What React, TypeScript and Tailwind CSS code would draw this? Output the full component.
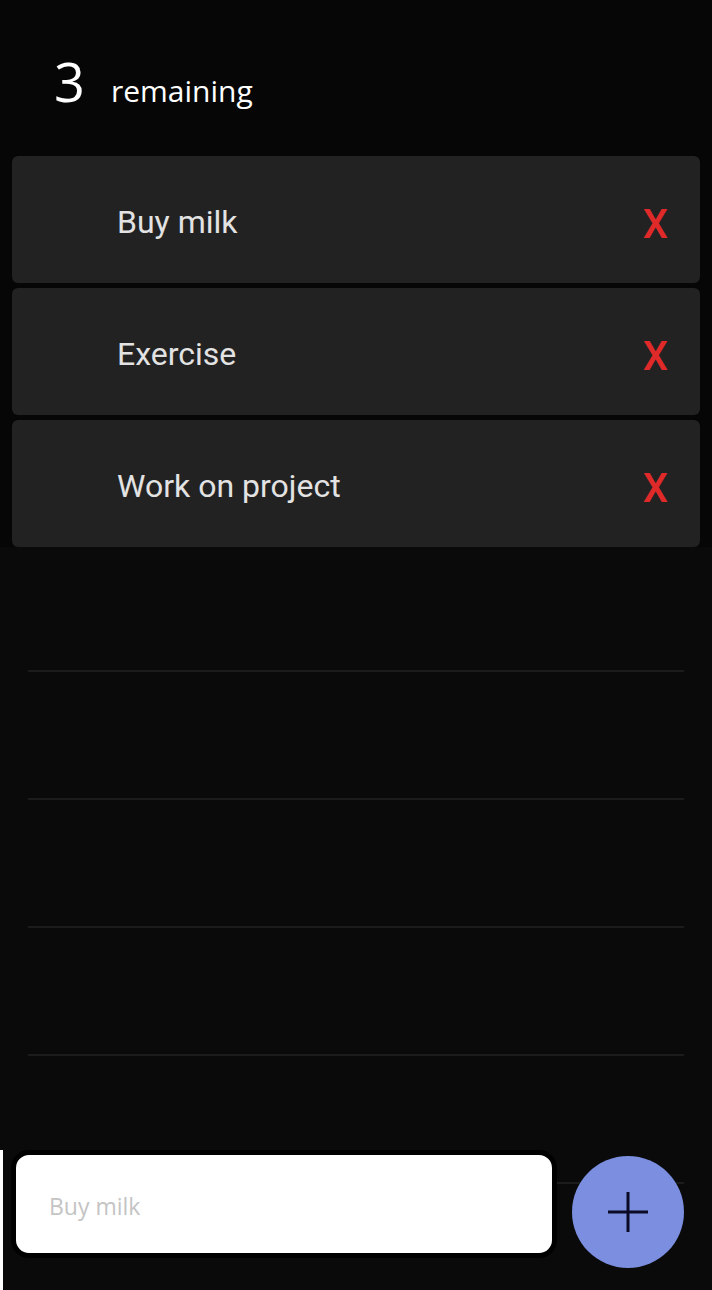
import { useState } from "react";

interface Todo {
  id: number;
  text: string;
}

const initial: Todo[] = [
  { id: 1, text: "Buy milk" },
  { id: 2, text: "Exercise" },
  { id: 3, text: "Work on project" },
];

export default function App() {
  const [todos, setTodos] = useState<Todo[]>(initial);
  const [input, setInput] = useState("");

  function add() {
    if (!input.trim()) return;
    setTodos((prev) => [...prev, { id: Date.now(), text: input.trim() }]);
    setInput("");
  }

  function remove(id: number) {
    setTodos((prev) => prev.filter((t) => t.id !== id));
  }

  return (
    <div className="relative w-[712px] h-[1290px] overflow-hidden bg-[#0a0a0a] font-['Open_Sans',sans-serif]">
      {/* Header */}
      <div className="h-[156px] bg-[#060606] pt-[54px] pl-[54px] flex items-baseline text-white">
        <span className="text-[54px] leading-none">{todos.length}</span>
        <span className="ml-[26px] text-[30px] leading-none">remaining</span>
      </div>

      {/* Todo cards */}
      <div className="px-[12px] flex flex-col gap-[5px] bg-[#060606]">
        {todos.map((t) => (
          <div
            key={t.id}
            className="h-[127px] rounded-[6px] bg-[#222222] flex items-center justify-between pl-[105px] pr-[32px]"
          >
            <span className="pt-[4px] font-['Roboto',sans-serif] text-[32px] leading-none text-[#e3e3e3]">
              {t.text}
            </span>
            <button
              onClick={() => remove(t.id)}
              className="pt-[10px] font-['Roboto',sans-serif] font-medium text-[40px] leading-none text-[#e02a2a]"
            >
              X
            </button>
          </div>
        ))}
      </div>

      {/* Empty rows */}
      <div className="mx-[28px] pt-[123px] flex flex-col">
        {[0, 1, 2, 3, 4].map((i) => (
          <div key={i} className="h-[128px] border-t-2 border-[#1c1c1c]" />
        ))}
      </div>

      {/* Input bar */}
      <div className="absolute left-0 top-[1150px] bottom-0 w-[3px] bg-white" />
      <div className="absolute left-[11px] top-[1150px] flex items-start gap-[15px]">
        <form
          onSubmit={(e) => {
            e.preventDefault();
            add();
          }}
          className="w-[546px] h-[108px] rounded-[18px] border-[5px] border-black bg-white flex"
        >
          <input
            value={input}
            onChange={(e) => setInput(e.target.value)}
            placeholder="Buy milk"
            className="flex-1 bg-transparent rounded-[14px] pl-[33px] pt-[4px] text-[23px] text-[#333] placeholder:text-[#c4c4c4] focus:outline-none font-['Open_Sans',sans-serif]"
          />
        </form>
        <button
          onClick={add}
          className="mt-[6px] w-[112px] h-[112px] rounded-full bg-[#7b8ee0] flex items-center justify-center"
        >
          <svg viewBox="0 0 40 40" className="w-[40px] h-[40px]" fill="none" stroke="#0b0b26" strokeWidth="3">
            <path d="M20 0v40M0 20h40" />
          </svg>
        </button>
      </div>
    </div>
  );
}
